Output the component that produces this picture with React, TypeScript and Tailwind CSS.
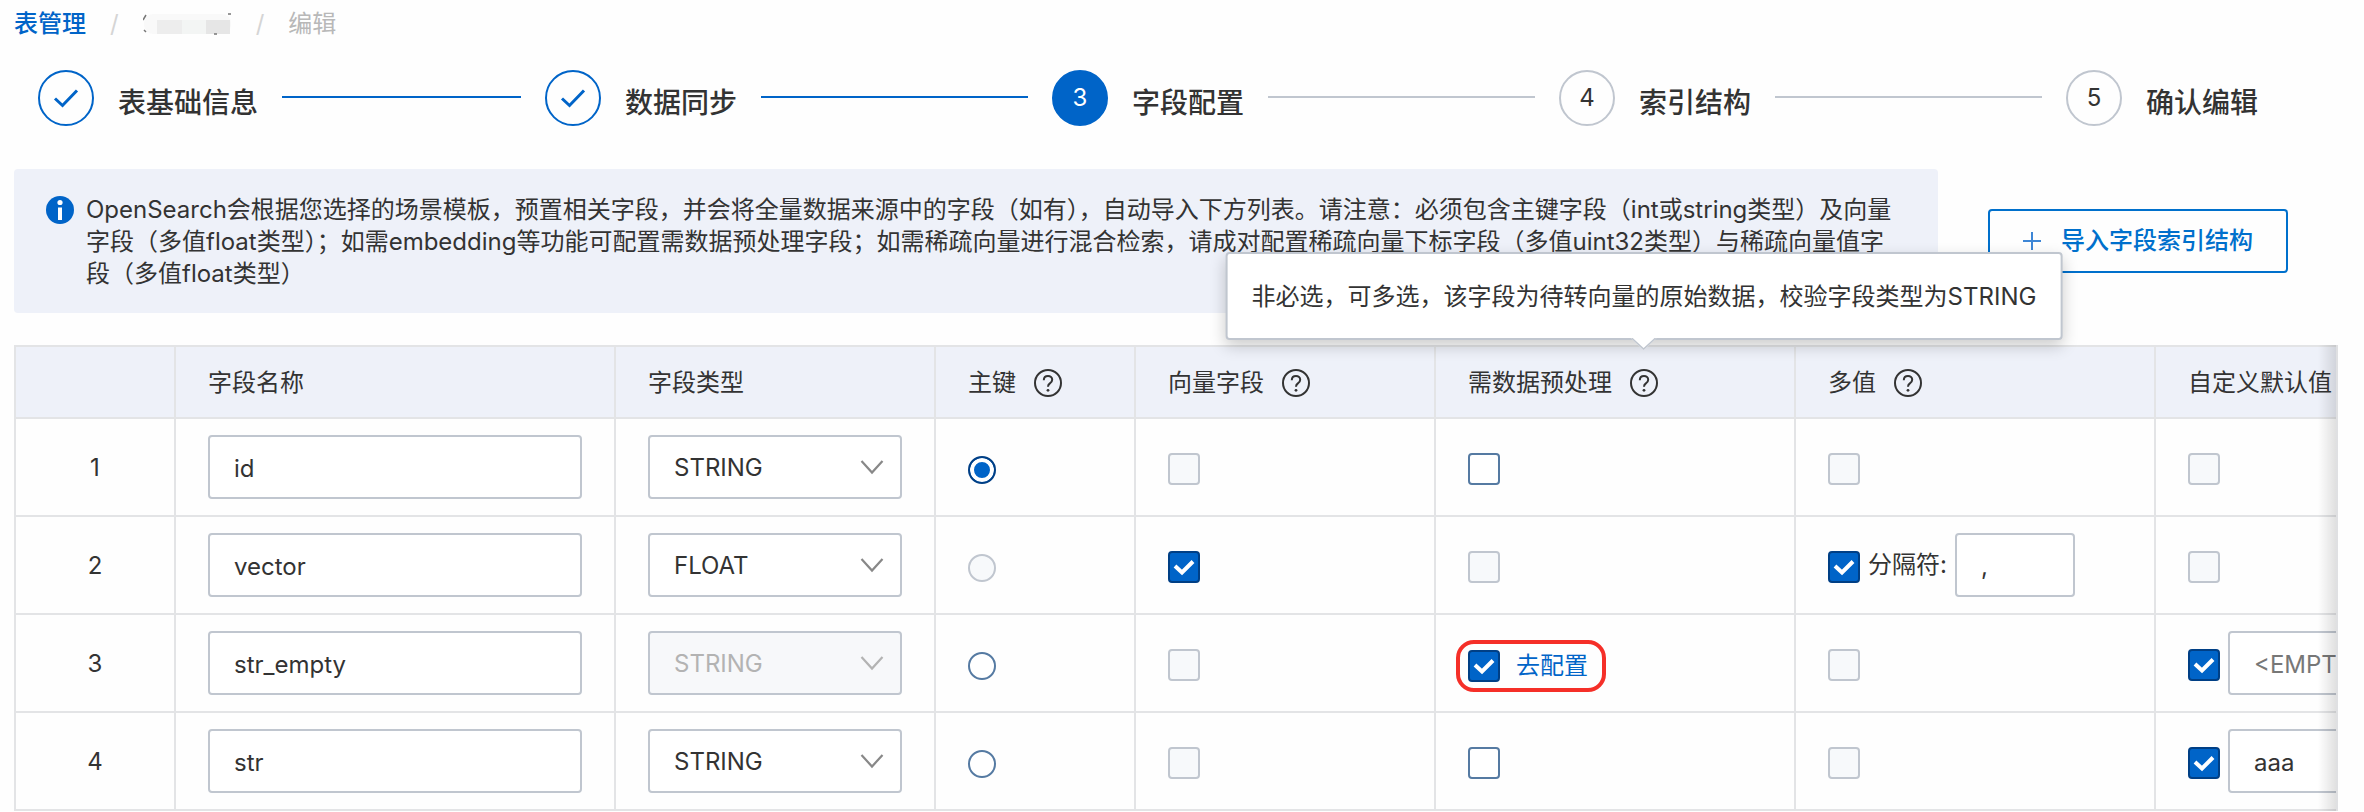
import { useState } from "react";
import { clsx } from "clsx";

type FieldType = "STRING" | "FLOAT";

type Field = {
  name: string;
  type: FieldType;
  typeLocked?: boolean;
  primaryDisabled?: boolean;
  vector?: boolean;
  vectorDisabled?: boolean;
  preprocess?: boolean;
  preprocessDisabled?: boolean;
  separator?: string;
  defaultEnabled?: boolean;
  defaultValue?: string;
};

const steps = ["表基础信息", "数据同步", "字段配置", "索引结构", "确认编辑"];
const currentStep = 2;

const fields: Field[] = [
  { name: "id", type: "STRING", vectorDisabled: true },
  {
    name: "vector",
    type: "FLOAT",
    primaryDisabled: true,
    vector: true,
    preprocessDisabled: true,
    separator: ",",
  },
  {
    name: "str_empty",
    type: "STRING",
    typeLocked: true,
    vectorDisabled: true,
    preprocess: true,
    defaultEnabled: true,
    defaultValue: "",
  },
  {
    name: "str",
    type: "STRING",
    vectorDisabled: true,
    defaultEnabled: true,
    defaultValue: "aaa",
  },
];

const inputClass =
  "h-16 rounded-sm border-2 border-[#c0c6cf] bg-white px-6 pt-0.5 text-2xl text-[#333] outline-none placeholder:text-[#777] focus:border-[#0064c8]";

function Breadcrumb() {
  return (
    <nav aria-label="breadcrumb" className="flex h-12 items-center gap-6 pl-3.5">
      <a href="#tables" className="font-medium text-[#0064c8]">
        表管理
      </a>
      <span className="text-[#d5d5d5]">/</span>
      <MaskedName />
      <span className="text-[#d5d5d5]">/</span>
      <span className="text-[#b8b8b8]">编辑</span>
    </nav>
  );
}

// The table name is hidden behind a mosaic.
function MaskedName() {
  return (
    <svg width="89" height="22" viewBox="0 0 89 22" aria-hidden="true">
      <rect x="1" y="1" width="87" height="20" rx="9" fill="#f9f9f9" />
      <path d="M14 7h25v14H14z" fill="#ededed" />
      <path d="M39 7h24v14H39z" fill="#f3f5f4" />
      <path d="M63 7h24v14H63z" fill="#e6e6e6" />
      <path d="M0 7l3-5M1 17l2 2M85 1h3M71 21h3" stroke="#777" strokeWidth="1.5" />
    </svg>
  );
}

function StepBar() {
  return (
    <ol className="flex pt-[22px] pr-[106px] pl-[38px]">
      {steps.map((title, index) => {
        const done = index < currentStep;
        const active = index === currentStep;
        const last = index === steps.length - 1;

        return (
          <li
            key={title}
            aria-current={active ? "step" : undefined}
            className={clsx("flex items-center", !last && "flex-1")}
          >
            <span
              className={clsx(
                "flex size-14 shrink-0 items-center justify-center rounded-full border-2",
                done && "border-[#0064c8]",
                active && "border-[#0064c8] bg-[#0064c8] text-white",
                !done && !active && "border-[#c0c6cf]",
              )}
            >
              {done ? (
                <svg width="26" height="20" viewBox="0 0 26 20" fill="none" aria-hidden="true">
                  <path d="M2 10.5l7.5 7L24 2.5" stroke="#0064c8" strokeWidth="3" />
                </svg>
              ) : (
                index + 1
              )}
            </span>
            <span className="mt-2.5 ml-6 shrink-0 text-[28px] leading-10 font-medium">
              {title}
            </span>
            {!last && (
              <span
                className={clsx(
                  "mx-6 mb-0.5 h-0.5 flex-1",
                  done ? "bg-[#0064c8]" : "bg-[#c0c6cf]",
                )}
              />
            )}
          </li>
        );
      })}
    </ol>
  );
}

function Notice() {
  return (
    <div className="flex items-center gap-[50px] pt-[43px] pr-[76px] pl-3.5">
      <div
        role="note"
        className="flex min-h-36 flex-1 gap-3 rounded-sm bg-[#eef1f9] px-8 pt-[25px] pb-[23px]"
      >
        <svg className="mt-0.5 size-7 shrink-0" viewBox="0 0 28 28" aria-hidden="true">
          <circle cx="14" cy="14" r="14" fill="#0064c8" />
          <circle cx="14" cy="6.5" r="2.6" fill="#fff" />
          <path d="M12 11.5h4V24h-4z" fill="#fff" />
        </svg>
        <p className="leading-8">
          OpenSearch会根据您选择的场景模板，预置相关字段，并会将全量数据来源中的字段（如有），自动导入下方列表。请注意：必须包含主键字段（int或string类型）及向量字段（多值float类型）；如需embedding等功能可配置需数据预处理字段；如需稀疏向量进行混合检索，请成对配置稀疏向量下标字段（多值uint32类型）与稀疏向量值字段（多值float类型）
        </p>
      </div>
      <button
        type="button"
        className="flex h-16 w-[300px] shrink-0 items-center justify-center gap-5 rounded-sm border-2 border-[#0070cc] font-medium text-[#0070cc]"
      >
        <svg width="18" height="18" viewBox="0 0 18 18" aria-hidden="true">
          <path d="M9 0v18M0 9h18" stroke="#3d86d6" strokeWidth="2" />
        </svg>
        导入字段索引结构
      </button>
    </div>
  );
}

function HelpIcon() {
  return (
    <svg className="size-7" viewBox="0 0 28 28" fill="none" aria-hidden="true">
      <circle cx="14" cy="14" r="13" stroke="#333" strokeWidth="2" />
      <path
        d="M9.8 11.2c0-2.5 1.8-4.2 4.2-4.2s4.2 1.6 4.2 3.8c0 1.8-1 2.7-2.3 3.6-1.3.9-1.9 1.6-1.9 3.4"
        stroke="#333"
        strokeWidth="2"
      />
      <circle cx="14" cy="21.3" r="1.4" fill="#333" />
    </svg>
  );
}

type HeaderCellProps = {
  title: string;
  help?: boolean;
  tooltip?: string;
};

function HeaderCell({ title, help, tooltip }: HeaderCellProps) {
  return (
    <th
      scope="col"
      className="h-[72px] border-r-2 border-b-2 border-[#e3e4e6] bg-[#eef1f9] px-8 pt-0.5 text-left font-normal"
    >
      <div className="flex items-center gap-[18px]">
        {title}
        {help && (
          <button type="button" aria-label={`${title}说明`} className="relative">
            <HelpIcon />
            {tooltip && <Tooltip text={tooltip} />}
          </button>
        )}
      </div>
    </th>
  );
}

function Tooltip({ text }: { text: string }) {
  return (
    <span
      role="tooltip"
      className="absolute bottom-full left-1/2 z-20 mb-[29px] flex h-[88px] -translate-x-1/2 items-center rounded-sm border-2 border-[#c0c6cf] bg-white px-6 pt-0.5 whitespace-nowrap shadow-[0_6px_16px_rgba(0,0,0,0.2)]"
    >
      {text}
      <svg
        className="absolute -bottom-3 left-1/2 -translate-x-1/2"
        width="26"
        height="12"
        viewBox="0 0 26 12"
        aria-hidden="true"
      >
        <path d="M0 0h26L13 12z" fill="#fff" />
        <path d="M1 0l12 11L25 0" fill="none" stroke="#c0c6cf" strokeWidth="1.5" />
      </svg>
    </span>
  );
}

type CheckboxProps = {
  id?: string;
  label: string;
  checked?: boolean;
  disabled?: boolean;
};

function Checkbox({ id, label, checked, disabled }: CheckboxProps) {
  return (
    <span className="relative mt-1 size-8 shrink-0">
      <input
        id={id}
        type="checkbox"
        aria-label={label}
        defaultChecked={checked}
        disabled={disabled}
        className="peer block size-8 appearance-none rounded-sm border-2 border-[#557aa2] bg-white checked:border-[#003f85] checked:bg-[#0064c8] disabled:border-[#c0c6cf] disabled:bg-[#f7f9fb]"
      />
      <svg
        className="pointer-events-none absolute inset-0 hidden peer-checked:block"
        viewBox="0 0 32 32"
        fill="none"
        aria-hidden="true"
      >
        <path d="M7 15l7 6.5L25 10.5" stroke="#fff" strokeWidth="4" />
      </svg>
    </span>
  );
}

type TypeSelectProps = {
  label: string;
  value: FieldType;
  disabled?: boolean;
};

function TypeSelect({ label, value, disabled }: TypeSelectProps) {
  return (
    <div className="relative">
      <select
        aria-label={label}
        defaultValue={value}
        disabled={disabled}
        className={clsx(
          inputClass,
          "block w-full appearance-none disabled:bg-[#f7f8fa] disabled:text-[#b3b3b3] disabled:opacity-100",
        )}
      >
        <option>STRING</option>
        <option>FLOAT</option>
      </select>
      <svg
        className="pointer-events-none absolute top-6 right-[18px]"
        width="24"
        height="16"
        viewBox="0 0 24 16"
        fill="none"
        aria-hidden="true"
      >
        <path
          d="M1.5 2L12 13.5 22.5 2"
          stroke={disabled ? "#b3b3b3" : "#888"}
          strokeWidth="2.2"
        />
      </svg>
    </div>
  );
}

function Cell({ children }: { children: React.ReactNode }) {
  return (
    <td className="h-[98px] border-r-2 border-b-2 border-[#e3e4e6] px-8">
      <div className="flex items-center gap-2">{children}</div>
    </td>
  );
}

function FieldTable() {
  const [primary, setPrimary] = useState("id");

  return (
    <div className="relative mt-8 mr-[26px] ml-3.5 overflow-x-clip">
      <table className="w-max table-fixed border-separate border-spacing-0 border-t-2 border-l-2 border-[#e3e4e6]">
        <colgroup>
          <col className="w-40" />
          <col className="w-[440px]" />
          <col className="w-80" />
          <col className="w-[200px]" />
          <col className="w-[300px]" />
          <col className="w-[360px]" />
          <col className="w-[360px]" />
          <col className="w-[400px]" />
        </colgroup>
        <thead>
          <tr>
            <HeaderCell title="" />
            <HeaderCell title="字段名称" />
            <HeaderCell title="字段类型" />
            <HeaderCell title="主键" help />
            <HeaderCell title="向量字段" help />
            <HeaderCell
              title="需数据预处理"
              help
              tooltip="非必选，可多选，该字段为待转向量的原始数据，校验字段类型为STRING"
            />
            <HeaderCell title="多值" help />
            <HeaderCell title="自定义默认值" />
          </tr>
        </thead>
        <tbody>
          {fields.map((field, index) => (
            <tr key={field.name}>
              <td className="h-[98px] border-r-2 border-b-2 border-[#e3e4e6] pt-0.5 text-center">
                {index + 1}
              </td>
              <td className="h-[98px] border-r-2 border-b-2 border-[#e3e4e6] px-8">
                <input
                  type="text"
                  aria-label={`字段名称 ${index + 1}`}
                  defaultValue={field.name}
                  className={clsx(inputClass, "block w-full")}
                />
              </td>
              <td className="h-[98px] border-r-2 border-b-2 border-[#e3e4e6] px-8">
                <TypeSelect
                  label={`字段类型 ${index + 1}`}
                  value={field.type}
                  disabled={field.typeLocked}
                />
              </td>
              <Cell>
                <input
                  type="radio"
                  name="primary"
                  aria-label={`主键 ${field.name}`}
                  checked={primary === field.name}
                  onChange={() => setPrimary(field.name)}
                  disabled={field.primaryDisabled}
                  className="mt-1.5 size-7 appearance-none rounded-full border-2 border-[#557aa2] bg-white checked:border-[#003f85] checked:bg-[#0064c8] checked:shadow-[inset_0_0_0_4px_#fff] disabled:border-[#c0c6cf] disabled:bg-[#f7f9fb]"
                />
              </Cell>
              <Cell>
                <Checkbox
                  label={`向量字段 ${field.name}`}
                  checked={field.vector}
                  disabled={field.vectorDisabled}
                />
              </Cell>
              <Cell>
                {field.preprocess ? (
                  <div className="mt-1.5 -ml-3 flex h-[52px] items-center gap-4 rounded-[18px] border-4 border-[#f52f28] pr-3.5 pl-2">
                    <span className="-mt-1 flex">
                      <Checkbox label={`需数据预处理 ${field.name}`} checked />
                    </span>
                    <a href="#configure" className="text-[#0064c8]">
                      去配置
                    </a>
                  </div>
                ) : (
                  <Checkbox
                    label={`需数据预处理 ${field.name}`}
                    disabled={field.preprocessDisabled}
                  />
                )}
              </Cell>
              <Cell>
                <Checkbox
                  label={`多值 ${field.name}`}
                  checked={field.separator !== undefined}
                  disabled={field.separator === undefined}
                />
                {field.separator !== undefined && (
                  <>
                    <label htmlFor={`separator-${field.name}`}>分隔符:</label>
                    <input
                      id={`separator-${field.name}`}
                      type="text"
                      defaultValue={field.separator}
                      className={clsx(inputClass, "w-[120px]")}
                    />
                  </>
                )}
              </Cell>
              <Cell>
                <Checkbox
                  label={`自定义默认值 ${field.name}`}
                  checked={field.defaultEnabled}
                  disabled={!field.defaultEnabled}
                />
                {field.defaultEnabled && (
                  <input
                    type="text"
                    aria-label={`默认值 ${field.name}`}
                    placeholder="<EMPTY>"
                    defaultValue={field.defaultValue}
                    className={clsx(inputClass, "min-w-0 flex-1")}
                  />
                )}
              </Cell>
            </tr>
          ))}
        </tbody>
      </table>
      <div className="pointer-events-none absolute inset-y-0 right-0 w-5 border-r-2 border-[#dfe0e2] bg-linear-to-r from-transparent to-black/12" />
    </div>
  );
}

export default function App() {
  return (
    <main className="overflow-x-clip bg-[#fefefe] font-['Inter','Noto_Sans_CJK_SC',sans-serif] text-2xl text-[#333]">
      <Breadcrumb />
      <StepBar />
      <Notice />
      <FieldTable />
    </main>
  );
}
